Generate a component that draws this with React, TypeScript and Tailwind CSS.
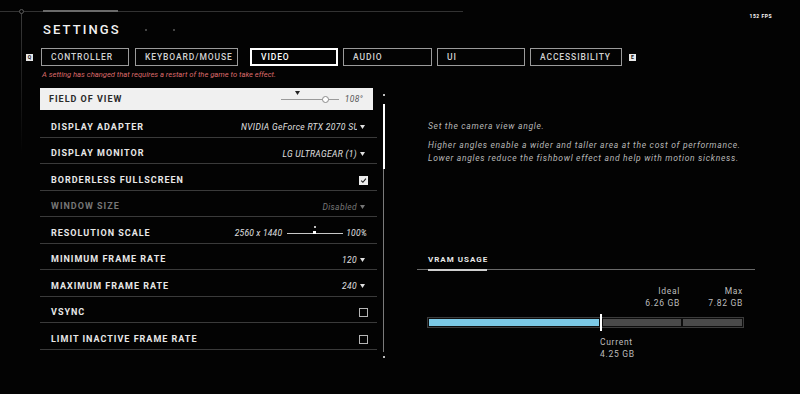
import React from 'react'

type Row = {
  label: string
  kind: 'select' | 'check' | 'scale'
  value?: string
  checked?: boolean
  disabled?: boolean
  clip?: boolean
}

const tabs = [
  { label: 'CONTROLLER', w: 'w-[88px]', ml: 'ml-[8px]' },
  { label: 'KEYBOARD/MOUSE', w: 'w-[103px]', ml: 'ml-[6px]' },
  { label: 'VIDEO', w: 'w-[88px]', ml: 'ml-[12px]', active: true },
  { label: 'AUDIO', w: 'w-[89px]', ml: 'ml-[5px]' },
  { label: 'UI', w: 'w-[88px]', ml: 'ml-[5px]' },
  { label: 'ACCESSIBILITY', w: 'w-[92px]', ml: 'ml-[5px]' },
]

const rows: Row[] = [
  { label: 'DISPLAY ADAPTER', kind: 'select', value: 'NVIDIA GeForce RTX 2070 SUPER', clip: true },
  { label: 'DISPLAY MONITOR', kind: 'select', value: 'LG ULTRAGEAR (1)' },
  { label: 'BORDERLESS FULLSCREEN', kind: 'check', checked: true },
  { label: 'WINDOW SIZE', kind: 'select', value: 'Disabled', disabled: true },
  { label: 'RESOLUTION SCALE', kind: 'scale' },
  { label: 'MINIMUM FRAME RATE', kind: 'select', value: '120' },
  { label: 'MAXIMUM FRAME RATE', kind: 'select', value: '240' },
  { label: 'VSYNC', kind: 'check' },
  { label: 'LIMIT INACTIVE FRAME RATE', kind: 'check' },
]

function Arrow({ className = '' }: { className?: string }) {
  return (
    <svg width="5" height="4" viewBox="0 0 5 4" className={className}>
      <path d="M0 0h5L2.5 4z" fill="currentColor" />
    </svg>
  )
}

function KeyHint({ k }: { k: string }) {
  return (
    <div className="flex h-[7px] w-[7px] items-center justify-center bg-[#e8e8e8] text-[5px] font-bold leading-none text-[#111]">
      {k}
    </div>
  )
}

function SettingRow({ row }: { row: Row }) {
  const dim = row.disabled
  return (
    <div className="flex h-[26.5px] items-center justify-between border-b border-[#3a3a3a] pl-[11px] pt-[7px]">
      <span
        className={`text-[9px] font-bold leading-none tracking-[1px] ${dim ? 'text-[#767676]' : 'text-[#e8e8e8]'}`}
      >
        {row.label}
      </span>

      {row.kind === 'select' && (
        <div className={`flex items-center pr-[12px] ${dim ? 'text-[#767676]' : 'text-[#e0e0e0]'}`}>
          <span
            className={`whitespace-nowrap text-[8.5px] italic leading-[10px] tracking-[0.35px] ${row.clip ? 'w-[116px] overflow-hidden' : ''}`}
          >
            {row.value}
          </span>
          <Arrow className="ml-[3px]" />
        </div>
      )}

      {row.kind === 'check' && (
        <div className="pr-[9px]">
          {row.checked ? (
            <div className="flex h-[9px] w-[9px] items-center justify-center bg-[#ececec]">
              <svg width="7" height="7" viewBox="0 0 7 7">
                <path d="M1.2 3.6l1.7 1.7L5.9 1.6" stroke="#1a1a1a" strokeWidth="1.1" fill="none" />
              </svg>
            </div>
          ) : (
            <div className="h-[9px] w-[9px] border border-[#b5b5b5]" />
          )}
        </div>
      )}

      {row.kind === 'scale' && (
        <div className="flex items-center pr-[10px] text-[#e0e0e0]">
          <span className="text-[8.5px] italic leading-none tracking-[0.2px]">2560 x 1440</span>
          <div className="relative ml-[5px] h-px w-[56px] bg-[#c8c8c8]">
            <div className="absolute left-[26px] top-[-1.5px] h-[3px] w-[3px] bg-white" />
            <div className="absolute left-[26.5px] top-[-7px] h-[2px] w-[2px] rounded-full bg-white" />
          </div>
          <span className="ml-[3px] text-[8.5px] italic leading-none tracking-[0.2px]">100%</span>
        </div>
      )}
    </div>
  )
}

export default function App() {
  return (
    <div className="relative h-[394px] w-[800px] overflow-hidden bg-[#030303] font-['Roboto','Liberation_Sans',sans-serif] text-[#e6e6e6]">
      {/* frame decoration */}
      <div className="absolute left-0 top-[11px] h-px w-[463px] bg-[#323232]" />
      <div className="absolute left-[43px] top-[10px] h-[2px] w-[75px] bg-[#6a6a6a]" />
      <div className="absolute left-[21px] top-[13px] h-[140px] w-px bg-linear-to-b from-[#3a3a3a] to-transparent" />
      <div className="absolute left-[19px] top-[9px] h-[5px] w-[5px] rounded-full border border-[#5a5a5a] bg-[#030303]" />
      <div className="absolute right-[28px] top-[14px] text-[5px] font-bold leading-none tracking-[0.5px] text-white">
        152 FPS
      </div>

      {/* Header */}
      <div className="flex items-center pl-[43px] pt-[22px]">
        <h1 className="text-[13px] font-medium leading-[16px] tracking-[2.1px] text-[#f2f2f2]">SETTINGS</h1>
        <div className="ml-[24px] h-[2px] w-[2px] rounded-full bg-[#5a5a5a]" />
        <div className="ml-[26px] h-[2px] w-[2px] rounded-full bg-[#5a5a5a]" />
      </div>

      {/* Tabs */}
      <div className="mt-[10px] flex h-[18px] items-center pl-[26px]">
        <KeyHint k="Q" />
        {tabs.map((t) => (
          <div
            key={t.label}
            className={`flex h-[18px] items-center whitespace-nowrap pl-[9px] text-[8.5px] font-medium leading-none tracking-[0.9px] ${t.w} ${t.ml} ${
              t.active ? 'border-2 border-white pl-[8px] text-white' : 'border border-[#9a9a9a] text-[#d2d2d2]'
            }`}
          >
            {t.label}
          </div>
        ))}
        <div className="ml-[7px]">
          <KeyHint k="E" />
        </div>
      </div>

      {/* Restart warning */}
      <p className="mt-[4px] pl-[42px] text-[7.6px] italic leading-[10px] text-[#dc6a6a]">
        A setting has changed that requires a restart of the game to take effect.
      </p>

      {/* Main */}
      <div className="mt-[8px] flex pl-[40px]">
        {/* Settings list */}
        <div className="w-[337px]">
          <div className="flex h-[22px] w-[333px] items-center justify-between bg-[#f0f0f0] pl-[9px] pr-[10px]">
            <span className="text-[9px] font-bold leading-none tracking-[1px] text-[#2a2a2a]">FIELD OF VIEW</span>
            <div className="flex items-center">
              <div className="relative h-px w-[58px] bg-[#9a9a9a]">
                <Arrow className="absolute left-[14px] top-[-8px] text-[#222]" />
                <div className="absolute left-[41px] top-[-3px] h-[7px] w-[7px] rounded-full border border-[#8a8a8a] bg-white" />
              </div>
              <span className="ml-[6px] text-[8.5px] italic leading-none tracking-[0.3px] text-[#555]">108°</span>
            </div>
          </div>
          <div className="mt-px">
            {rows.map((r) => (
              <SettingRow key={r.label} row={r} />
            ))}
          </div>
        </div>

        {/* Scrollbar */}
        <div className="ml-[5px] flex w-[3px] flex-col items-center pt-[6px]">
          <div className="h-[2px] w-[2px] bg-[#bbb]" />
          <div className="mt-[8px] flex h-[248px] w-[2px] flex-col items-center">
            <div className="h-[65px] w-[2px] bg-white" />
            <div className="w-px flex-1 bg-[#7a7a7a]" />
          </div>
          <div className="mt-[4px] h-[2px] w-[2px] bg-[#bbb]" />
        </div>

        {/* Details */}
        <div className="ml-[32px] w-[338px] pt-[32px]">
          <div className="pl-[11px] text-[8.5px] italic leading-[13px] tracking-[0.7px] text-[#b8b8b8]">
            <p>Set the camera view angle.</p>
            <p className="mt-[6px] whitespace-nowrap">
              Higher angles enable a wider and taller area at the cost of performance.
              <br />
              Lower angles reduce the fishbowl effect and help with motion sickness.
            </p>
          </div>

          <div className="mt-[90px] pl-[11px] text-[8px] font-bold leading-[10px] tracking-[1px] text-[#e8e8e8]">
            VRAM USAGE
          </div>
          <div className="mt-[4px] flex h-px items-center bg-[#6a6a6a]">
            <div className="ml-[11px] h-[2px] w-[59px] bg-[#cfcfcf]" />
          </div>

          <div className="pl-[10px] pr-[11px]">
            <div className="mt-[15px] flex text-[8.5px] leading-[12px] tracking-[0.7px] text-[#bdbdbd]">
              <div className="w-[253px] text-right">
                <div>Ideal</div>
                <div>6.26 GB</div>
              </div>
              <div className="flex-1 pr-px text-right">
                <div>Max</div>
                <div>7.82 GB</div>
              </div>
            </div>

            <div className="mt-[8px] flex h-[11px] items-center gap-px border border-[#3c3c3c] bg-[#0d0d0d] px-px">
              <div className="h-[7px] w-[170px] bg-[#7cc9e6]" />
              <div className="h-[17px] w-[2px] shrink-0 bg-white" />
              <div className="h-[7px] w-[78px] bg-[#4a4a4a]" />
              <div className="ml-px h-[7px] flex-1 bg-[#4a4a4a]" />
            </div>

            <div className="ml-[173px] mt-[8px] text-[8.5px] leading-[12px] tracking-[0.7px] text-[#bdbdbd]">
              <div>Current</div>
              <div>4.25 GB</div>
            </div>
          </div>
        </div>
      </div>
    </div>
  )
}
